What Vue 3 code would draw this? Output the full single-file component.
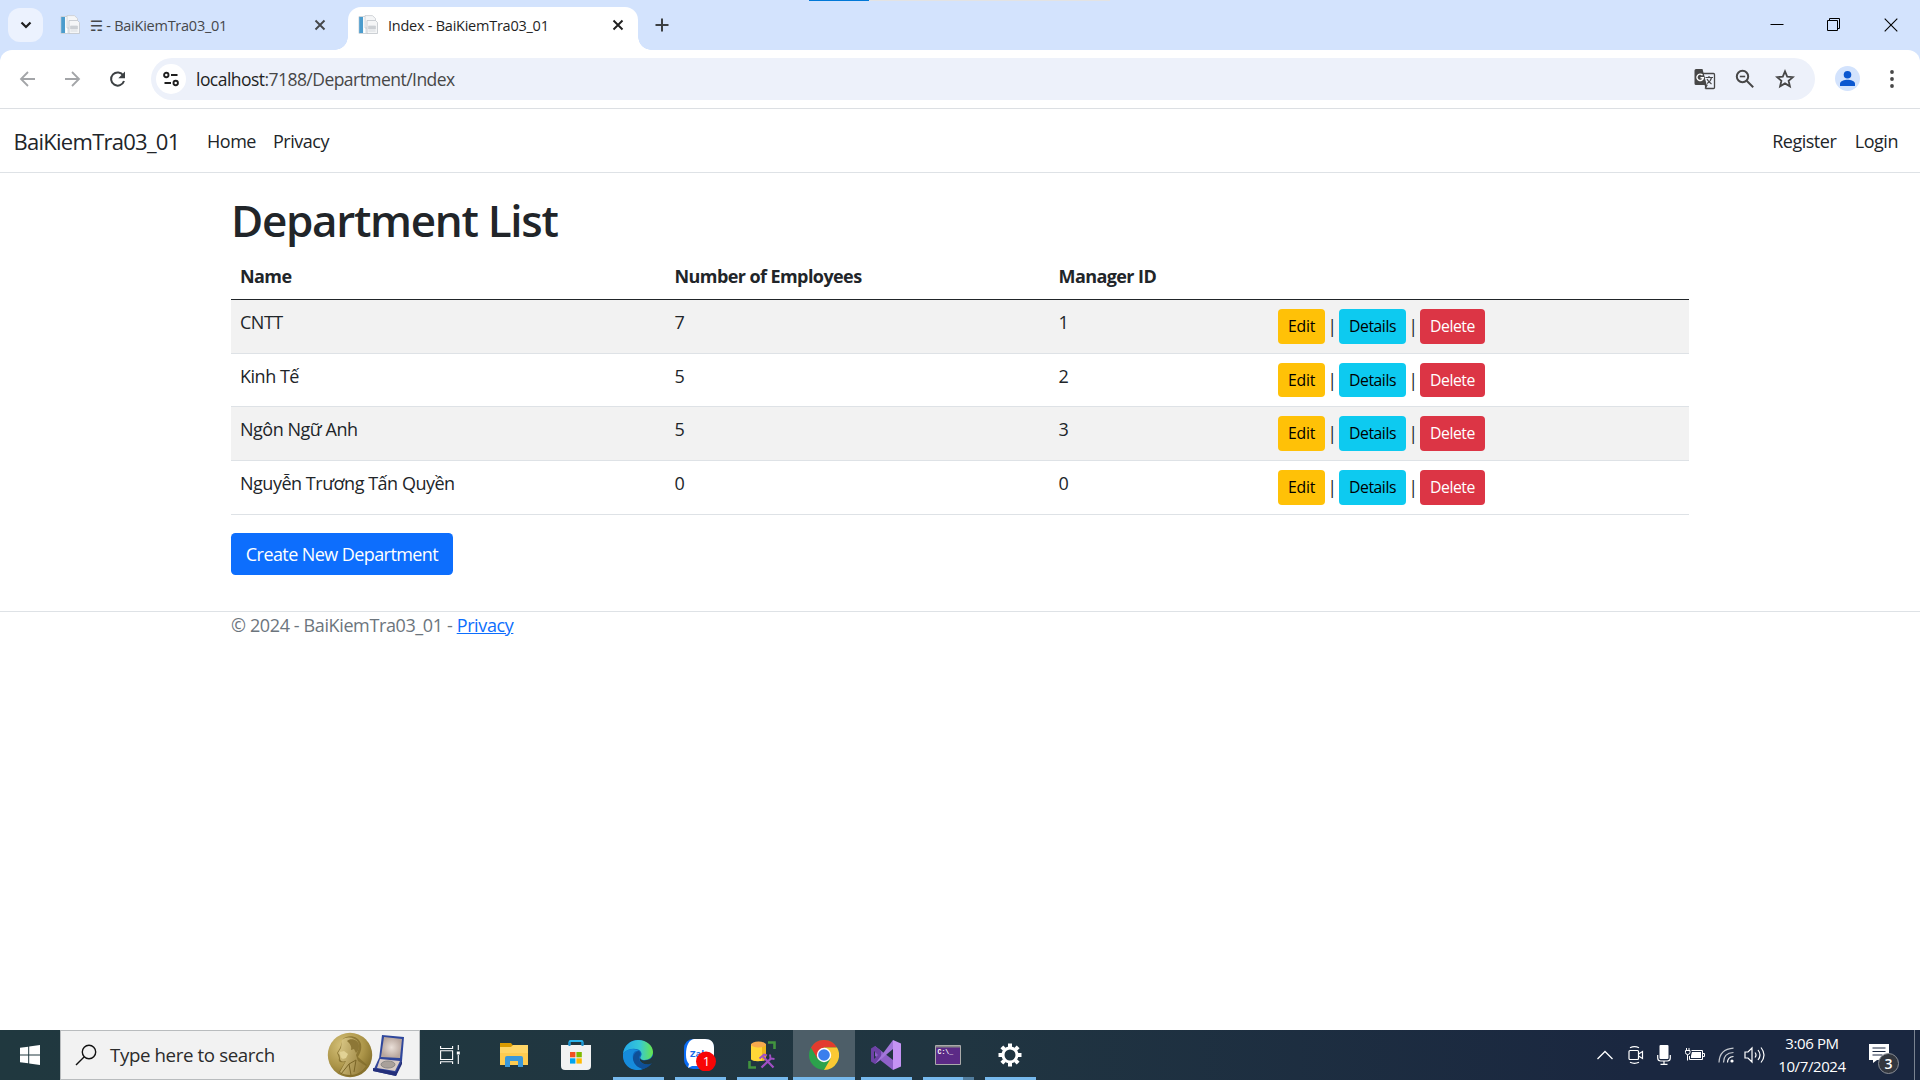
<script setup>
const rows = [
  { name: 'CNTT', count: 7, manager: 1 },
  { name: 'Kinh Tế', count: 5, manager: 2 },
  { name: 'Ngôn Ngữ Anh', count: 5, manager: 3 },
  { name: 'Nguyễn Trương Tấn Quyền', count: 0, manager: 0 },
]
const tabs = [
  { title: '☴ - BaiKiemTra03_01', active: false },
  { title: 'Index - BaiKiemTra03_01', active: true },
]
</script>

<template>
  <div class="screen">
    <header class="tabstrip">
      <div class="share-bar"></div>
      <div class="tab-search">
        <svg width="12" height="12" viewBox="0 0 12 12"><path d="M1.5 3.500L6 8l4.500-4.500" fill="none" stroke="#1f1f1f" stroke-width="2.200" /></svg>
      </div>
      <div v-for="t in tabs" :key="t.title" class="tab" :class="{ active: t.active }">
        <svg class="favicon" width="20" height="20" viewBox="0 0 20 20">
          <path d="M1 1.500h9v17H1z" fill="#e9eef2" stroke="#c5ccd2" stroke-width=".8" />
          <path d="M1.200 2h4v16h-4z" fill="#4b9ccd" />
          <path d="M5.200 2h1.800v16H5.200z" fill="#fff" />
          <path d="M7 .6h7.500l3 3V13H7z" fill="#f5f6f7" stroke="#c8ccd0" stroke-width=".8" />
          <path d="M9 5.500h8.500l2 2v11H9z" fill="#f5f6f7" stroke="#c0c5ca" stroke-width=".8" />
          <path d="M10.500 11h7v3h-7zM10.500 16h7" fill="#ccd0d4" stroke="#ccd0d4" stroke-width=".7" />
        </svg>
        <span class="tab-title">{{ t.title }}</span>
        <svg class="tab-close" width="12" height="12" viewBox="0 0 12 12"><path d="M1.500 1.500l9 9M10.500 1.500l-9 9" stroke="currentColor" stroke-width="1.900" /></svg>
      </div>
      <svg class="new-tab" width="14" height="14" viewBox="0 0 14 14"><path d="M7 .5v13M.5 7h13" stroke="#3c4043" stroke-width="2" /></svg>
      <div class="window-buttons">
        <svg width="14" height="14" viewBox="0 0 14 14"><path d="M.5 6.500h13" stroke="#000" /></svg>
        <svg width="14" height="14" viewBox="0 0 14 14"><path d="M.5 2.500h10v10H.5zM2.500 2.500V.5h10v10h-2" fill="none" stroke="#000" /></svg>
        <svg width="14" height="14" viewBox="0 0 14 14"><path d="M.7.7l12.600 12.600M13.300.7L.7 13.300" stroke="#000" stroke-width="1.100" /></svg>
      </div>
    </header>

    <div class="toolbar">
      <svg class="nav-icon" width="20" height="20" viewBox="0 0 20 20"><path d="M17 10H3M10 3l-7 7 7 7" fill="none" stroke="#a3a5a8" stroke-width="1.800" /></svg>
      <svg class="nav-icon" width="20" height="20" viewBox="0 0 20 20"><path d="M2 10h14M9 3l7 7-7 7" fill="none" stroke="#a3a5a8" stroke-width="1.800" /></svg>
      <svg class="nav-icon" width="20" height="20" viewBox="0 0 20 20"><path d="M15.300 6.500A6.600 6.600 0 1 0 16 12" fill="none" stroke="#3c4043" stroke-width="2" /><path d="M17 2.500v6.700h-6.700z" fill="#3c4043" /></svg>
      <div class="omnibox">
        <div class="site-info">
          <svg width="18" height="16" viewBox="0 0 18 16" fill="none" stroke="#1f1f1f" stroke-width="1.900"><circle cx="4.300" cy="4" r="2.200" /><path d="M9 4h6.500M2.500 12H9" /><circle cx="13.700" cy="12" r="2.200" /></svg>
        </div>
        <span class="url"><b>localhost</b>:7188/Department/Index</span>
        <svg class="translate" width="22" height="22" viewBox="0 0 22 22">
          <path d="M9 5.500h10.500a1 1 0 0 1 1 1v13a1 1 0 0 1-1 1H12z" fill="#edf1fa" stroke="#474747" stroke-width="1.300" />
          <path d="M2 1h6.500l4.200 16H2a1.500 1.500 0 0 1-1.500-1.500v-13A1.500 1.500 0 0 1 2 1z" fill="#474747" />
          <path d="M8.500 7.200A3.200 3.200 0 1 0 9.300 9.800H6.500" fill="none" stroke="#fff" stroke-width="1.400" />
          <path d="M11.500 9.500h7.500M15 8v1.500M17.500 9.500c-.5 2.500-2.500 5-4.500 6M13 11c1 2 3 4 4.500 5M11 17l2 .2-2 3.300" fill="none" stroke="#474747" stroke-width="1.200" />
        </svg>
        <svg class="zoom-icon" width="20" height="20" viewBox="0 0 20 20" fill="none" stroke="#474747" stroke-width="2"><circle cx="7.500" cy="7.500" r="5.700" /><path d="M11.700 11.700l6.500 6.500" /><path d="M4.800 7.500h5.400" stroke-width="1.600" /></svg>
        <svg class="star" width="20" height="20" viewBox="0 0 20 20"><path d="M10 2.400l2.200 5.200 5.700.5-4.300 3.700 1.300 5.500-4.900-2.900-4.900 2.900 1.300-5.500L2.100 8.100l5.700-.5z" fill="none" stroke="#474747" stroke-width="1.800" /></svg>
      </div>
      <svg class="avatar" width="25" height="25" viewBox="0 0 25 25"><circle cx="12.500" cy="12.500" r="12.500" fill="#d3e3fd" /><circle cx="12.500" cy="8.700" r="3.800" fill="#0b57d0" /><path d="M5 20v-2.200c0-2.800 4.500-4 7.500-4s7.500 1.200 7.500 4V20z" fill="#0b57d0" /></svg>
      <svg class="menu-dots" width="6" height="20" viewBox="0 0 6 20" fill="#474747"><circle cx="3" cy="3" r="1.900" /><circle cx="3" cy="10" r="1.900" /><circle cx="3" cy="17" r="1.900" /></svg>
    </div>

    <div class="page">
      <nav class="navbar">
        <a class="brand">BaiKiemTra03_01</a>
        <a class="nav-link home">Home</a>
        <a class="nav-link privacy">Privacy</a>
        <a class="nav-link register">Register</a>
        <a class="nav-link login">Login</a>
      </nav>
      <main class="container">
        <h1>Department List</h1>
        <table>
          <thead>
            <tr><th class="c1">Name</th><th class="c2">Number of Employees</th><th class="c3">Manager ID</th><th></th></tr>
          </thead>
          <tbody>
            <tr v-for="r in rows" :key="r.name">
              <td>{{ r.name }}</td>
              <td>{{ r.count }}</td>
              <td>{{ r.manager }}</td>
              <td>
                <div class="actions">
                  <a class="btn edit">Edit</a><i>|</i><a class="btn details">Details</a><i>|</i><a class="btn delete">Delete</a>
                </div>
              </td>
            </tr>
          </tbody>
        </table>
        <a class="create">Create New Department</a>
      </main>
      <footer class="footer">
        <div class="container">© 2024 - BaiKiemTra03_01 - <a>Privacy</a></div>
      </footer>
    </div>

    <div class="taskbar">
      <div class="start">
        <svg width="20" height="20" viewBox="0 0 20 20" fill="#fff"><path d="M0 2.800L8.200 1.700v7.800H0zM9.200 1.500L20 0v9.500H9.200zM0 10.500h8.200v7.800L0 17.200zM9.200 10.500H20V20L9.200 18.500z" /></svg>
      </div>
      <div class="search">
        <svg class="search-glass" width="22" height="22" viewBox="0 0 22 22" fill="none" stroke="#111" stroke-width="1.400"><circle cx="14" cy="8" r="6.700" /><path d="M9.300 12.800L1 21" /></svg>
        <span>Type here to search</span>
        <svg class="medal" width="84" height="46" viewBox="0 0 84 46">
          <defs>
            <radialGradient id="gold" cx=".35" cy=".3" r=".8"><stop offset="0" stop-color="#d8c47c" /><stop offset=".6" stop-color="#ab9448" /><stop offset="1" stop-color="#7c6724" /></radialGradient>
            <radialGradient id="silk"><stop offset="0" stop-color="#eadfd8" /><stop offset="1" stop-color="#b9a79e" /></radialGradient>
            <linearGradient id="face" x1="0" y1="0" x2="1" y2=".4"><stop offset="0" stop-color="#e0ce8c" /><stop offset="1" stop-color="#9a8340" /></linearGradient>
          </defs>
          <circle cx="24" cy="23" r="22.200" fill="url(#gold)" />
          <path d="M17 7c5-5 16-3 18 5 1 6-1 9-3 13l9 8c-4 7-10 11-17 11-5 0-9-2-11-4l6-10c-5 1-7 0-6-4l-1-3-1-2 3-5z" fill="#7f6929" opacity=".75" />
          <path d="M16 8c4-4 13-3 16 2 2 5 0 9-2 13l2 6 8 5c-4 6-9 9-16 9-4 0-8-1-10-3l6-11c-4 1-6 0-6-3l-.5-3-1.500-2 3-5z" fill="url(#face)" />
          <path d="M21 9c4-4 12-1 12 5 0 3-1 5-3 7l-2-4-3 1c1-4-1-6-4-9z" fill="#8d7736" />
          <path d="M14 20l4-1 4 3-2 4c-4 2-6 0-6-6z" fill="#e2d295" />
          <path d="M30 28l-7 4-8 10M23 32l2 11M30 28l-2 12" fill="none" stroke="#7a6527" stroke-width="1" />
          <path d="M56 3l22 2-2 24-23-2z" fill="#2f479c" /><path d="M58 5l18 2-2 19-19-1z" fill="url(#silk)" />
          <path d="M53 26l23 2-6 16-23-5z" fill="#33479a" /><path d="M54 27l20 2-5 10-18-3z" fill="#d9cbc4" /><ellipse cx="62" cy="32.500" rx="7" ry="3.600" fill="#a9a09a" stroke="#777" stroke-width=".7" />
          <path d="M47 36l23 4v4l-23-5zM70 40l6-12v4l-6 12z" fill="#242f7a" />
        </svg>
      </div>
      <div class="task view">
        <svg width="20" height="20" viewBox="0 0 20 20" fill="none" stroke="#fff" stroke-width="1.100"><path d="M.6 1v2.500h12V1M.6 5.800h12v8.700H.6zM.6 19v-2.300h12V19M18.300 0v5M18.300 10v9" /><path d="M16.800 6.500h3v3h-3z" fill="#fff" stroke="none" /></svg>
      </div>
      <div class="task">
        <svg width="28" height="24" viewBox="0 0 28 24"><path d="M0 0h11l2 2.500V6H0z" fill="#d99a00" /><path d="M0 4h11l2-2h15v20H0z" fill="#ffd566" /><path d="M0 10h28v12H0z" fill="#fecb50" /><path d="M5 24v-9a2 2 0 0 1 2-2h14a2 2 0 0 1 2 2v9h-5v-6h-8v6z" fill="#3b98d9" /></svg>
      </div>
      <div class="task">
        <svg width="30" height="30" viewBox="0 0 30 30"><path d="M8.500 8V2q0-1 1-1h11q1 0 1 1v6" fill="none" stroke="#2ab4ed" stroke-width="2" /><path d="M0 5h30v21a4 4 0 0 1-4 4H4a4 4 0 0 1-4-4z" fill="#f2f2f2" /><path d="M8.500 2v4M21.500 2v4" stroke="#1a91d0" stroke-width="2" /><path d="M9 12h5.400v5.300H9z" fill="#f25022" /><path d="M15.400 12h5.400v5.300h-5.400z" fill="#7fba00" /><path d="M9 18.300h5.400v5.300H9z" fill="#00a4ef" /><path d="M15.400 18.300h5.400v5.300h-5.400z" fill="#ffb900" /></svg>
      </div>
      <div class="task open">
        <svg width="30" height="30" viewBox="0 0 30 30">
          <defs><linearGradient id="edgeTop"><stop offset="0" stop-color="#22a7e8" /><stop offset=".55" stop-color="#36c7d7" /><stop offset="1" stop-color="#68e64c" /></linearGradient></defs>
          <circle cx="15" cy="15" r="15" fill="#0d66bb" />
          <path d="M0 14C1 5 8 0 15 0c9 0 15 6 15 12 0 5-4 8-8.500 8-3 0-5-1-4-3 1-1.500 1.500-3 .5-5-2-4-13-5-18 2z" fill="url(#edgeTop)" />
          <path d="M0 14c4-6 12-6 16-3-5-1-7 4-6 8 1 6 6 9 10 10C9 33-1 25 0 14z" fill="#168bdc" />
          <path d="M16 11c-3 0-6 4-6 8 1 6 6 9 10 10 4-1 7-3 9-6-6 3-13 1-13-5 0-3 3-3 0-7z" fill="#0f4f96" />
          <path d="M30.500 13c0 5-5 8-10 7.500-3-.5-4-2-3-3.500-2 3 0 6 4 7 3 .8 6 0 8.500-1.500a15 15 0 0 0 .5-9.500z" fill="#20363e" />
        </svg>
      </div>
      <div class="task open">
        <svg width="32" height="32" viewBox="0 0 32 32"><rect width="30" height="30" rx="9" fill="#0a6cf5" /><path d="M10 0h11c6 0 9 3 9 9v9c0 6-3 9-9 9H8l-4 2 1-4c-2-2-3-5-3-9C2 6 5 1 10 0z" fill="#fff" /><text x="6" y="17.500" class="zalo">Zalo</text><circle cx="22" cy="22.500" r="10" fill="#f80606" /><text x="18.800" y="27.300" class="zalo-count">1</text></svg>
      </div>
      <div class="task open">
        <svg width="28" height="28" viewBox="0 0 28 28"><path d="M3 3v15c0 3 15 3 15 0V3z" fill="#ffd737" /><path d="M14 5v14c2 0 4-1 4-2V3z" fill="#eeb71c" /><ellipse cx="10.500" cy="3.500" rx="7.500" ry="3" fill="#f6a94d" /><path d="M20 1.500h6.500V8M1.500 20v6.500H8" fill="none" stroke="#42943f" stroke-width="2.600" /><path d="M15 15.500l10.500 11M23.500 17L13.500 26.500" stroke="#a04fc4" stroke-width="2.200" /><path d="M11.500 17.500l4.500-4 3 1M22 13.500l.5 4 4 .5" stroke="#a04fc4" stroke-width="1.900" fill="none" /></svg>
      </div>
      <div class="task open current">
        <svg width="30" height="30" viewBox="0 0 30 30"><circle cx="15" cy="15" r="15" fill="#2ca24c" /><path d="M2 7.500A15 15 0 0 1 28 7.500H15L8.500 18.700z" fill="#e33b2e" /><path d="M28 7.500A15 15 0 0 1 15 30l6.500-11.300L15 7.500z" fill="#fcc934" /><circle cx="15" cy="15" r="7.200" fill="#fff" /><circle cx="15" cy="15" r="5.800" fill="#3b7fed" /></svg>
      </div>
      <div class="task open">
        <svg width="30" height="30" viewBox="0 0 30 30"><path d="M4 6l18 14v10L4 16z" fill="#8f61c9" /><path d="M4 6L0 8.500v13L4 24l6-4.500V11zM3 11l4 4-4 4z" fill="#6d42a6" fill-rule="evenodd" /><path d="M4 24L22 0v9L9 20z" fill="#a276da" /><path d="M22 0l8 3.500v23L22 30z" fill="#c593f4" /></svg>
      </div>
      <div class="task open multi">
        <svg width="26" height="20" viewBox="0 0 26 20"><path d="M.5.5h25v19H.5z" fill="#5b2a86" stroke="#aaa" /><path d="M1 1h24v1.500H1z" fill="#888" /><text x="2.500" y="9" class="prompt">C:\_</text></svg>
      </div>
      <div class="task open">
        <svg width="24" height="24" viewBox="-12 -12 24 24"><circle r="7" fill="none" stroke="#fff" stroke-width="3" /><g stroke="#fff" stroke-width="4"><path v-for="a in 8" :key="a" d="M0-8v-3.500" :transform="`rotate(${a * 45})`" /></g></svg>
      </div>
      <div class="tray">
        <svg class="i-up" width="16" height="10" viewBox="0 0 16 10"><path d="M.5 9L8 1.500 15.500 9" fill="none" stroke="#fff" stroke-width="1.300" /></svg>
        <svg class="i-cam" width="16" height="18" viewBox="0 0 16 18" fill="none" stroke="#fff" stroke-width="1.200"><rect x="1" y="4.500" width="9.500" height="9" rx="1" /><path d="M10.500 8l4-2.500v7l-4-2.500M2 1.800q4.500-2.200 9 0M2 16.200q4.500 2.200 9 0" /></svg>
        <svg class="i-mic" width="14" height="20" viewBox="0 0 14 20"><rect x="2.500" y="0" width="9" height="14" rx="1" fill="#fff" /><path d="M.7 10v3q0 3 3 3h6.600q3 0 3-3v-3M7 16v3M3.500 19.300h7" fill="none" stroke="#fff" stroke-width="1.200" /></svg>
        <svg class="i-bat" width="20" height="14" viewBox="0 0 20 14"><path d="M6.500 2.500h11v9h-13V8M17.500 5.500h2v3h-2M2.500 6.500v6M1.500 0v2.500M4 0v2.500M.5 2.500h4.500v2Q5 6.500 2.700 6.500T.5 4.500z" fill="none" stroke="#fff" /><path d="M7 4h9v6H6V7.500z" fill="#fff" /></svg>
        <svg class="i-wifi" width="16" height="16" viewBox="0 0 16 16" fill="none" stroke="#fff" stroke-width="1.200"><circle cx="14" cy="14" r="1.600" fill="#fff" stroke="none" /><path d="M9.500 15.500q0-5.500 6-6" /><path d="M5.500 15.500q0-9.500 10-10M1 15.500Q1.500 2 15.500 1.200" opacity=".75" /></svg>
        <svg class="i-vol" width="21" height="18" viewBox="0 0 21 18" fill="none" stroke="#fff" stroke-width="1.200"><path d="M1 6h3l4-4v14l-4-4H1zM11 6.500q2 2.500 0 5M14 4q4 5 0 10M17 1.500q6 7.500 0 15" /></svg>
        <div class="clock"><span class="time">3:06 PM</span><span class="date">10/7/2024</span></div>
        <svg class="i-note" width="32" height="32" viewBox="0 0 32 32"><path d="M1 1h20v16H9l-4 3v-3H1z" fill="#fff" /><path d="M4.500 5h13M4.500 8.500h13M4.500 12h10" stroke="#1a2740" stroke-width="1.200" /><circle cx="20.500" cy="20.500" r="10" fill="#33373f" stroke="#8b8f96" /><text x="16.500" y="25.700" class="note-count">3</text></svg>
      </div>
    </div>
  </div>
</template>

<style>
body { background: #fff; overflow: hidden; }
</style>

<style scoped>
* { box-sizing: border-box; }
.screen { width: 1920px; height: 1080px; display: flex; flex-direction: column; overflow: hidden; font-family: "Open Sans", "Noto Sans", "DejaVu Sans", sans-serif; color: #212529; background: #fff; }
svg { display: block; flex: none; }
.tabstrip { position: relative; height: 50px; flex: none; background: #d3e3fd; display: flex; align-items: flex-start; padding-left: 8px; }
.share-bar { position: absolute; top: 0; left: 809px; width: 301px; height: 1px; background: linear-gradient(90deg, #0078d7 60px, #e3e3e3 60px); }
.tab-search { width: 35px; height: 34px; margin-top: 8px; border-radius: 12px; background: #ecf2fe; display: flex; align-items: center; justify-content: center; }
.tab { position: relative; height: 43px; margin-top: 7px; display: flex; align-items: center; color: #45474a; font-size: 14.500px; padding-bottom: 7px; width: 290px; padding-left: 10px; border-radius: 13px 13px 0 0; }
.tab:not(.active) { margin-left: 8px; width: 297px; padding-left: 9px; }
.tab.active { background: #fff; color: #1f1f1f; }
.tab.active::before, .tab.active::after { content: ""; position: absolute; bottom: 0; width: 13px; height: 13px; }
.tab.active::before { left: -13px; background: radial-gradient(circle at 0 0, transparent 12.500px, #fff 13px); }
.tab.active::after { right: -13px; background: radial-gradient(circle at 100% 0, transparent 12.500px, #fff 13px); }
.favicon { margin-right: 10px; }
.tab-title { white-space: nowrap; width: 215px; letter-spacing: -.25px; }
.tab-close { margin-left: 9px; }
.new-tab { margin: 18px 0 0 17px; }
.window-buttons { margin-left: auto; display: flex; gap: 43px; padding: 18px 22px 0 0; }
.toolbar { height: 59px; flex: none; background: #fff; display: flex; align-items: center; padding: 0 0 1px 18px; border-bottom: 1px solid #dcdfe3; border-radius: 12px 12px 0 0; box-shadow: 0 -12px 0 #d3e3fd; }
.nav-icon { margin-right: 25px; }
.omnibox { width: 1664px; height: 42px; margin-left: -2px; border-radius: 21px; background: #edf1fa; display: flex; align-items: center; padding-left: 5px; }
.site-info { width: 30px; height: 30px; border-radius: 50%; background: #fff; display: flex; align-items: center; justify-content: center; }
.url { margin-left: 10px; font-size: 17.500px; letter-spacing: -.54px; color: #474747; }
.url b { font-weight: 400; color: #1f1f1f; }
.translate { margin-left: auto; }
.zoom-icon { margin-left: 19px; }
.star { margin: 0 20px 0 20px; }
.avatar { margin-left: 20px; }
.menu-dots { margin-left: 29px; }
.page { flex: 1; min-height: 0; font-size: 18px; line-height: 27px; letter-spacing: -.48px; }
.navbar { height: 64px; border-bottom: 1px solid #dee2e6; display: flex; align-items: center; padding: 1px 22px 0 13.500px; }
.brand { width: 193.500px; font-size: 22px; letter-spacing: -.73px; }
.nav-link.home { width: 66px; }
.register { margin-left: auto; }
.login { margin-left: 18.500px; }
.container { width: 1458px; margin: 0 auto; }
h1 { margin: 0; padding-top: 20px; font-size: 44px; line-height: 54px; font-weight: 600; letter-spacing: -1.300px; height: 81px; }
table { width: 100%; border-collapse: collapse; table-layout: fixed; }
th, td { text-align: left; vertical-align: top; padding: 9px; border-bottom: 1px solid #dee2e6; }
th { font-weight: 700; height: 45px; border-color: #212529; letter-spacing: -.580px; }
td { height: 54px; padding-bottom: 0; }
tbody tr:nth-child(odd) { background: #f2f2f2; }
tbody tr:nth-child(2) td { height: 53px; }
tbody tr:nth-child(2) .actions { height: 34px; }
.c1 { width: 434.500px; }
.c2 { width: 384px; }
.c3 { width: 219.500px; }
.actions { display: flex; height: 35px; }
.actions i { font-style: normal; width: 14px; text-align: center; line-height: 34px; }
.btn { line-height: 35px; text-align: center; font-size: 15.750px; border-radius: 4px; color: #000; letter-spacing: -.450px; }
.edit { width: 47px; background: #ffc107; letter-spacing: -.200px; }
.details { width: 67px; background: #0dcaf0; }
.delete { width: 65px; background: #dc3545; color: #fff; }
.create { display: block; width: 222px; height: 42px; line-height: 42px; margin-top: 18px; text-align: center; background: #0d6efd; color: #fff; border-radius: 4.500px; letter-spacing: -.580px; }
.footer { margin-top: 36px; border-top: 1px solid #dee2e6; color: #6c757d; letter-spacing: -.380px; }
.footer a { color: #0d6efd; text-decoration: underline; }
.taskbar { height: 50px; flex: none; display: flex; background: linear-gradient(90deg, #20383f, #203541 50%, #1a2740 85%); color: #fff; }
.start { width: 60px; display: flex; align-items: center; justify-content: center; }
.search { width: 360px; background: #f2f2f2; border: 1px solid #b9bcbe; display: flex; align-items: center; padding-left: 14px; color: #2b2b2b; font-size: 18.700px; letter-spacing: -.380px; }
.search span { width: 204px; margin-left: 13px; padding-bottom: 2px; white-space: nowrap; }
.search .medal { margin-left: 12px; }
.task { position: relative; width: 62px; display: flex; align-items: center; justify-content: center; }
.task.view { width: 63px; padding-right: 3px; }
.task.open::after { content: ""; position: absolute; left: 6px; right: 5px; bottom: 0; height: 3px; background: #76b9ed; }
.task.current { background: #4d5e68; }
.task.current::after { left: 0; right: 0; }
.task.multi::after { background: linear-gradient(90deg, #76b9ed 40px, #527e9f 40px); }
.zalo { font: 700 9.500px "Open Sans", sans-serif; fill: #1769e8; }
.zalo-count { font: 13px "Open Sans", sans-serif; fill: #fff; }
.prompt { font: 700 6.500px "Liberation Mono", monospace; fill: #fff; }
.tray { margin-left: auto; display: flex; align-items: center; border-right: 1px solid #7a8391; margin-right: 5px; height: 50px; }
.i-cam { margin-left: 15px; }
.i-mic { margin-left: 13px; }
.i-bat { margin-left: 14px; }
.i-wifi { margin-left: 13px; }
.i-vol { margin-left: 10px; }
.clock { width: 84px; margin-left: 5px; display: flex; flex-direction: column; align-items: center; font-size: 15px; line-height: 23px; white-space: nowrap; letter-spacing: -.4px; }
.i-note { margin: 8px 14px 0 14px; }
.note-count { font: 600 14px "Open Sans", sans-serif; fill: #fff; }
</style>
